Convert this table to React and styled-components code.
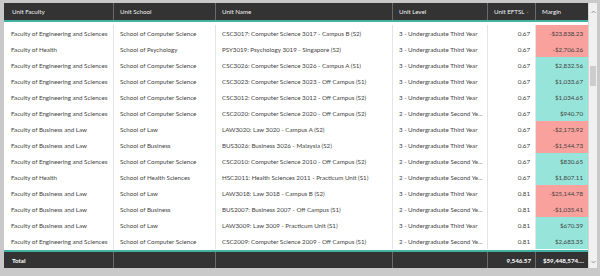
import React from 'react';
import styled, { createGlobalStyle } from 'styled-components';

const GlobalStyle = createGlobalStyle`
  html, body { margin: 0; padding: 0; background: #ffffff; }
  body { font-family: Lato, "Open Sans", sans-serif; }
`;

const COLS = '109px 102px 177px 95px 48px 53px';

const rows = [
  ['Faculty of Engineering and Sciences', 'School of Computer Science', 'CSC3017:  Computer Science 3017 - Campus B (S2)', '3 - Undergraduate Third Year', '0.67', '-$23,838.23'],
  ['Faculty of Health', 'School of Psychology', 'PSY3019:  Psychology 3019 - Singapore (S2)', '3 - Undergraduate Third Year', '0.67', '-$2,706.26'],
  ['Faculty of Engineering and Sciences', 'School of Computer Science', 'CSC3026:  Computer Science 3026 - Campus A (S1)', '3 - Undergraduate Third Year', '0.67', '$2,832.56'],
  ['Faculty of Engineering and Sciences', 'School of Computer Science', 'CSC3023:  Computer Science 3023 - Off Campus (S1)', '3 - Undergraduate Third Year', '0.67', '$1,033.67'],
  ['Faculty of Engineering and Sciences', 'School of Computer Science', 'CSC3012:  Computer Science 3012 - Off Campus (S2)', '3 - Undergraduate Third Year', '0.67', '$1,034.65'],
  ['Faculty of Engineering and Sciences', 'School of Computer Science', 'CSC2020:  Computer Science 2020 - Off Campus (S2)', '2 - Undergraduate Second Ye...', '0.67', '$940.70'],
  ['Faculty of Business and Law', 'School of Law', 'LAW3020:  Law 3020 - Campus A (S2)', '3 - Undergraduate Third Year', '0.67', '-$2,173.92'],
  ['Faculty of Business and Law', 'School of Business', 'BUS3026:  Business 3026 - Malaysia (S2)', '3 - Undergraduate Third Year', '0.67', '-$1,544.73'],
  ['Faculty of Engineering and Sciences', 'School of Computer Science', 'CSC2010:  Computer Science 2010 - Off Campus (S2)', '2 - Undergraduate Second Ye...', '0.67', '$830.65'],
  ['Faculty of Health', 'School of Health Sciences', 'HSC2011:  Health Sciences 2011 - Practicum Unit (S1)', '2 - Undergraduate Second Ye...', '0.67', '$1,807.11'],
  ['Faculty of Business and Law', 'School of Law', 'LAW3018:  Law 3018 - Campus B (S2)', '3 - Undergraduate Third Year', '0.81', '-$25,144.78'],
  ['Faculty of Business and Law', 'School of Business', 'BUS2007:  Business 2007 - Off Campus (S1)', '2 - Undergraduate Second Ye...', '0.81', '-$1,035.41'],
  ['Faculty of Business and Law', 'School of Law', 'LAW3009:  Law 3009 - Practicum Unit (S1)', '3 - Undergraduate Third Year', '0.81', '$670.39'],
  ['Faculty of Engineering and Sciences', 'School of Computer Science', 'CSC2009:  Computer Science 2009 - Off Campus (S1)', '2 - Undergraduate Second Ye...', '0.81', '$2,683.35'],
];

const Frame = styled.div`
  width: 600px;
  height: 276px;
  box-sizing: border-box;
  background: #c9c9c9;
  padding: 3px 3px 8px 4px;
  display: grid;
  grid-template-columns: 584px 9px;
`;

const Table = styled.div`
  display: flex;
  flex-direction: column;
  background: #ffffff;
`;

const HeaderRow = styled.div`
  display: grid;
  grid-template-columns: ${COLS};
  height: 17px;
  background: #333333;
  border-bottom: 2px solid #41b3a5;
`;

const HeadCell = styled.div`
  display: flex;
  align-items: center;
  justify-content: ${(p) => (p.$right ? 'flex-end' : 'flex-start')};
  gap: 3px;
  padding: 0 6px 0 ${(p) => (p.$first ? '8px' : '6px')};
  border-left: ${(p) => (p.$first ? 'none' : '1px solid #6a6a6a')};
  color: #f2f2f2;
  font-size: 6.2px;
  white-space: nowrap;
  overflow: hidden;
`;

const Body = styled.div`
  flex: 1;
  display: grid;
  grid-template-columns: ${COLS};
  grid-auto-rows: 16px;
  align-content: start;
  padding-top: 3px;
`;

const Cell = styled.div`
  display: flex;
  align-items: center;
  justify-content: ${(p) => (p.$right ? 'flex-end' : 'flex-start')};
  padding: 0 ${(p) => (p.$right ? '5px' : '2px')} 0 ${(p) => (p.$first ? '7px' : '6px')};
  border-left: ${(p) => (p.$first ? 'none' : '1px solid #e4e4e4')};
  background: ${(p) => p.$bg || 'transparent'};
  color: #444444;
  font-size: 6.2px;
  white-space: nowrap;
  overflow: hidden;
`;

const TotalRow = styled.div`
  display: grid;
  grid-template-columns: ${COLS};
  height: 16px;
  background: #333333;
  border-top: 2px solid #41b3a5;
`;

const TotalCell = styled(HeadCell)`
  font-weight: 700;
  color: #ffffff;
  padding-right: ${(p) => (p.$right ? '4px' : '6px')};
`;

const ScrollTrack = styled.div`
  display: flex;
  flex-direction: column;
  justify-content: space-between;
  align-items: center;
  background: #f0f0f0;
  border-left: 1px solid #d6d6d6;
  padding: 7px 0 4px;
`;

const Thumb = styled.div`
  position: relative;
  flex: 1;
  width: 100%;
`;

const ThumbBar = styled.div`
  position: absolute;
  left: 1px;
  right: 1px;
  top: 52px;
  height: 20px;
  background: #cdcdcd;
`;

const Chevron = ({ up }) => (
  <svg width="5" height="4" viewBox="0 0 5 4">
    <path d={up ? 'M0.5 3 L2.5 1 L4.5 3' : 'M0.5 1 L2.5 3 L4.5 1'} fill="none" stroke="#8a8a8a" strokeWidth="0.9" />
  </svg>
);

const SortIcon = () => (
  <svg width="7" height="4" viewBox="0 0 7 4">
    <path d="M1 3 L3.5 0.5 L6 3 Z" fill="#f2f2f2" />
    <rect x="0.5" y="3" width="6" height="0.8" fill="#f2f2f2" />
  </svg>
);

const PINK = '#f9a19c';
const TEAL = '#97e4da';

export default function App() {
  const heads = ['Unit Faculty', 'Unit School', 'Unit Name', 'Unit Level', 'Unit EFTSL', 'Margin'];
  return (
    <>
      <GlobalStyle />
      <Frame>
        <Table>
          <HeaderRow>
            {heads.map((h, i) => (
              <HeadCell key={h} $first={i === 0} $right={i === 4}>
                {h}
                {i === 4 && <SortIcon />}
              </HeadCell>
            ))}
          </HeaderRow>
          <Body>
            {rows.map((r, ri) =>
              r.map((v, ci) => (
                <Cell
                  key={`${ri}-${ci}`}
                  $first={ci === 0}
                  $right={ci >= 4}
                  $bg={ci === 5 ? (v.startsWith('-') ? PINK : TEAL) : undefined}
                >
                  {v}
                </Cell>
              )),
            )}
          </Body>
          <TotalRow>
            <TotalCell $first>Total</TotalCell>
            <TotalCell />
            <TotalCell />
            <TotalCell />
            <TotalCell $right>9,546.57</TotalCell>
            <TotalCell $right>$59,448,574....</TotalCell>
          </TotalRow>
        </Table>
        <ScrollTrack>
          <Chevron up />
          <Thumb>
            <ThumbBar />
          </Thumb>
          <Chevron />
        </ScrollTrack>
      </Frame>
    </>
  );
}
